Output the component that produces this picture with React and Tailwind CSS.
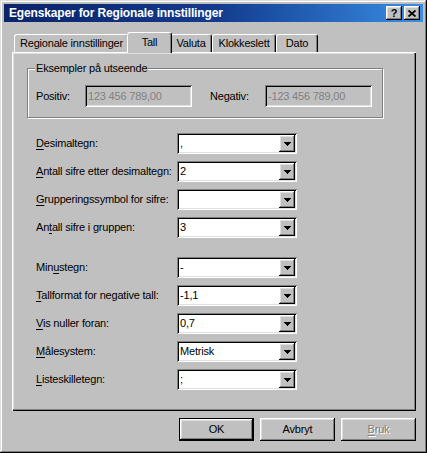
import React from "react";

const raised =
  "shadow-[inset_-1px_-1px_#000,inset_1px_1px_#fff,inset_-2px_-2px_#808080,inset_2px_2px_#dfdfdf]";
const sunken =
  "shadow-[inset_1px_1px_#808080,inset_-1px_-1px_#fff,inset_2px_2px_#000,inset_-2px_-2px_#dfdfdf]";

function U({ children }) {
  return <span className="underline decoration-1 underline-offset-[2px]">{children}</span>;
}

function Arrow() {
  return (
    <svg width="7" height="4" viewBox="0 0 7 4" shapeRendering="crispEdges">
      <path d="M0 0h7v1H0zM1 1h5v1H1zM2 2h3v1H2zM3 3h1v1H3z" fill="#000" />
    </svg>
  );
}

function Combo({ value }) {
  return (
    <div className={`flex h-[21px] w-[120px] bg-white p-[2px] ${sunken}`}>
      <div className="flex flex-1 items-center pl-[1px] text-[11px] leading-none text-black">{value}</div>
      <div className={`flex w-[16px] items-center justify-center bg-[#c0c0c0] ${raised}`}>
        <Arrow />
      </div>
    </div>
  );
}

function Row({ label, value }) {
  return (
    <div className="flex h-[21px] items-center">
      <div className="w-[141px] text-[11px] leading-none">{label}</div>
      <Combo value={value} />
    </div>
  );
}

function Field({ value }) {
  return (
    <div className={`flex h-[22px] w-[107px] items-center pl-[3px] text-[11px] leading-none text-[#808080] ${sunken}`}>
      {value}
    </div>
  );
}

function Tab({ label, width, active }) {
  if (active) {
    return (
      <div
        className={`relative z-10 mx-[-2px] mb-[-1px] flex h-[21px] items-center justify-center rounded-t-[3px] border-l border-t border-r border-l-white border-t-white border-r-black bg-[#c0c0c0] pb-[2px] shadow-[inset_-1px_0_#808080] ${width}`}
      >
        {label}
      </div>
    );
  }
  return (
    <div
      className={`flex h-[18px] items-center justify-center rounded-t-[3px] border-l border-t border-r border-l-white border-t-white border-r-black bg-[#c0c0c0] shadow-[inset_-1px_0_#808080] ${width}`}
    >
      {label}
    </div>
  );
}

function Button({ children, isDefault, disabled }) {
  const edge = isDefault
    ? "shadow-[inset_0_0_0_1px_#000,inset_-2px_-2px_#000,inset_2px_2px_#fff,inset_-3px_-3px_#808080,inset_3px_3px_#dfdfdf]"
    : raised;
  return (
    <div
      className={`flex h-[23px] w-[75px] items-center justify-center text-[11px] leading-none ${edge} ${
        disabled ? "text-[#808080] [text-shadow:1px_1px_0_#fff]" : "text-black"
      }`}
    >
      {children}
    </div>
  );
}

export default function App() {
  const firstRows = [
    [<><U>D</U>esimaltegn:</>, ","],
    [<><U>A</U>ntall sifre etter desimaltegn:</>, "2"],
    [<><U>G</U>rupperingssymbol for sifre:</>, ""],
    [<>An<U>t</U>all sifre i gruppen:</>, "3"],
  ];
  const secondRows = [
    [<>Min<U>u</U>stegn:</>, "-"],
    [<><U>T</U>allformat for negative tall:</>, "-1,1"],
    [<><U>V</U>is nuller foran:</>, "0,7"],
    [<><U>M</U>ålesystem:</>, "Metrisk"],
    [<><U>L</U>isteskilletegn:</>, ";"],
  ];

  return (
    <div className="h-[453px] w-[427px] bg-[#c0c0c0] p-[4px] font-['Liberation_Sans',Arial,sans-serif] tracking-[-0.2px] text-black shadow-[inset_-1px_-1px_#000,inset_1px_1px_#dfdfdf,inset_-2px_-2px_#808080,inset_2px_2px_#fff]">
      {/* title bar */}
      <div className="flex h-[18px] items-center bg-linear-to-r from-[#0a246a] via-[#123a8c] to-[#3a8ee6] pl-[5px] pr-[3px]">
        <div className="flex-1 text-[12px] font-bold leading-none tracking-[-0.15px] text-white">
          Egenskaper for Regionale innstillinger
        </div>
        <div className="flex gap-[2px]">
          <div className={`flex h-[14px] w-[16px] items-center justify-center bg-[#c0c0c0] text-[11px] font-bold leading-none ${raised}`}>
            ?
          </div>
          <div className={`flex h-[14px] w-[16px] items-center justify-center bg-[#c0c0c0] ${raised}`}>
            <svg width="8" height="7" viewBox="0 0 8 7">
              <path d="M0.5 0.5L7.5 6.5M7.5 0.5L0.5 6.5" stroke="#000" strokeWidth="1.7" />
            </svg>
          </div>
        </div>
      </div>

      {/* tabs */}
      <div className="ml-[8px] mt-[10px] flex h-[20px] items-end pl-[2px] text-[11px] leading-none">
        <Tab label="Regionale innstillinger" width="w-[115px]" />
        <Tab label="Tall" width="w-[45px]" active />
        <Tab label="Valuta" width="w-[42px]" />
        <Tab label="Klokkeslett" width="w-[64px]" />
        <Tab label="Dato" width="w-[42px]" />
      </div>

      {/* panel */}
      <div className="ml-[8px] h-[359px] w-[404px] px-[15px] pt-[16px] shadow-[inset_1px_1px_#fff,inset_-1px_-1px_#000,inset_-2px_-2px_#808080,inset_2px_2px_#dfdfdf]">
        <div className="relative h-[50px] w-[356px] border border-[#808080] pl-[8px] pt-[16px] shadow-[1px_1px_#fff,inset_1px_1px_#fff]">
          <span className="absolute left-[7px] top-[-7px] bg-[#c0c0c0] px-[1px] text-[11px] leading-[13px]">
            Eksempler på utseende
          </span>
          <div className="flex items-center text-[11px] leading-none">
            <div className="w-[49px]">Positiv:</div>
            <Field value="123 456 789,00" />
            <div className="ml-[18px] w-[55px]">Negativ:</div>
            <Field value="-123 456 789,00" />
          </div>
        </div>

        <div className="mt-[15px] flex flex-col gap-[7px] pl-[9px]">
          {firstRows.map(([l, v], i) => (
            <Row key={i} label={l} value={v} />
          ))}
        </div>
        <div className="mt-[19px] flex flex-col gap-[7px] pl-[9px]">
          {secondRows.map(([l, v], i) => (
            <Row key={i} label={l} value={v} />
          ))}
        </div>
      </div>

      {/* buttons */}
      <div className="ml-[8px] mt-[7px] flex w-[404px] justify-end gap-[6px]">
        <Button isDefault>OK</Button>
        <Button>Avbryt</Button>
        <Button disabled>
          <U>B</U>ruk
        </Button>
      </div>
    </div>
  );
}
